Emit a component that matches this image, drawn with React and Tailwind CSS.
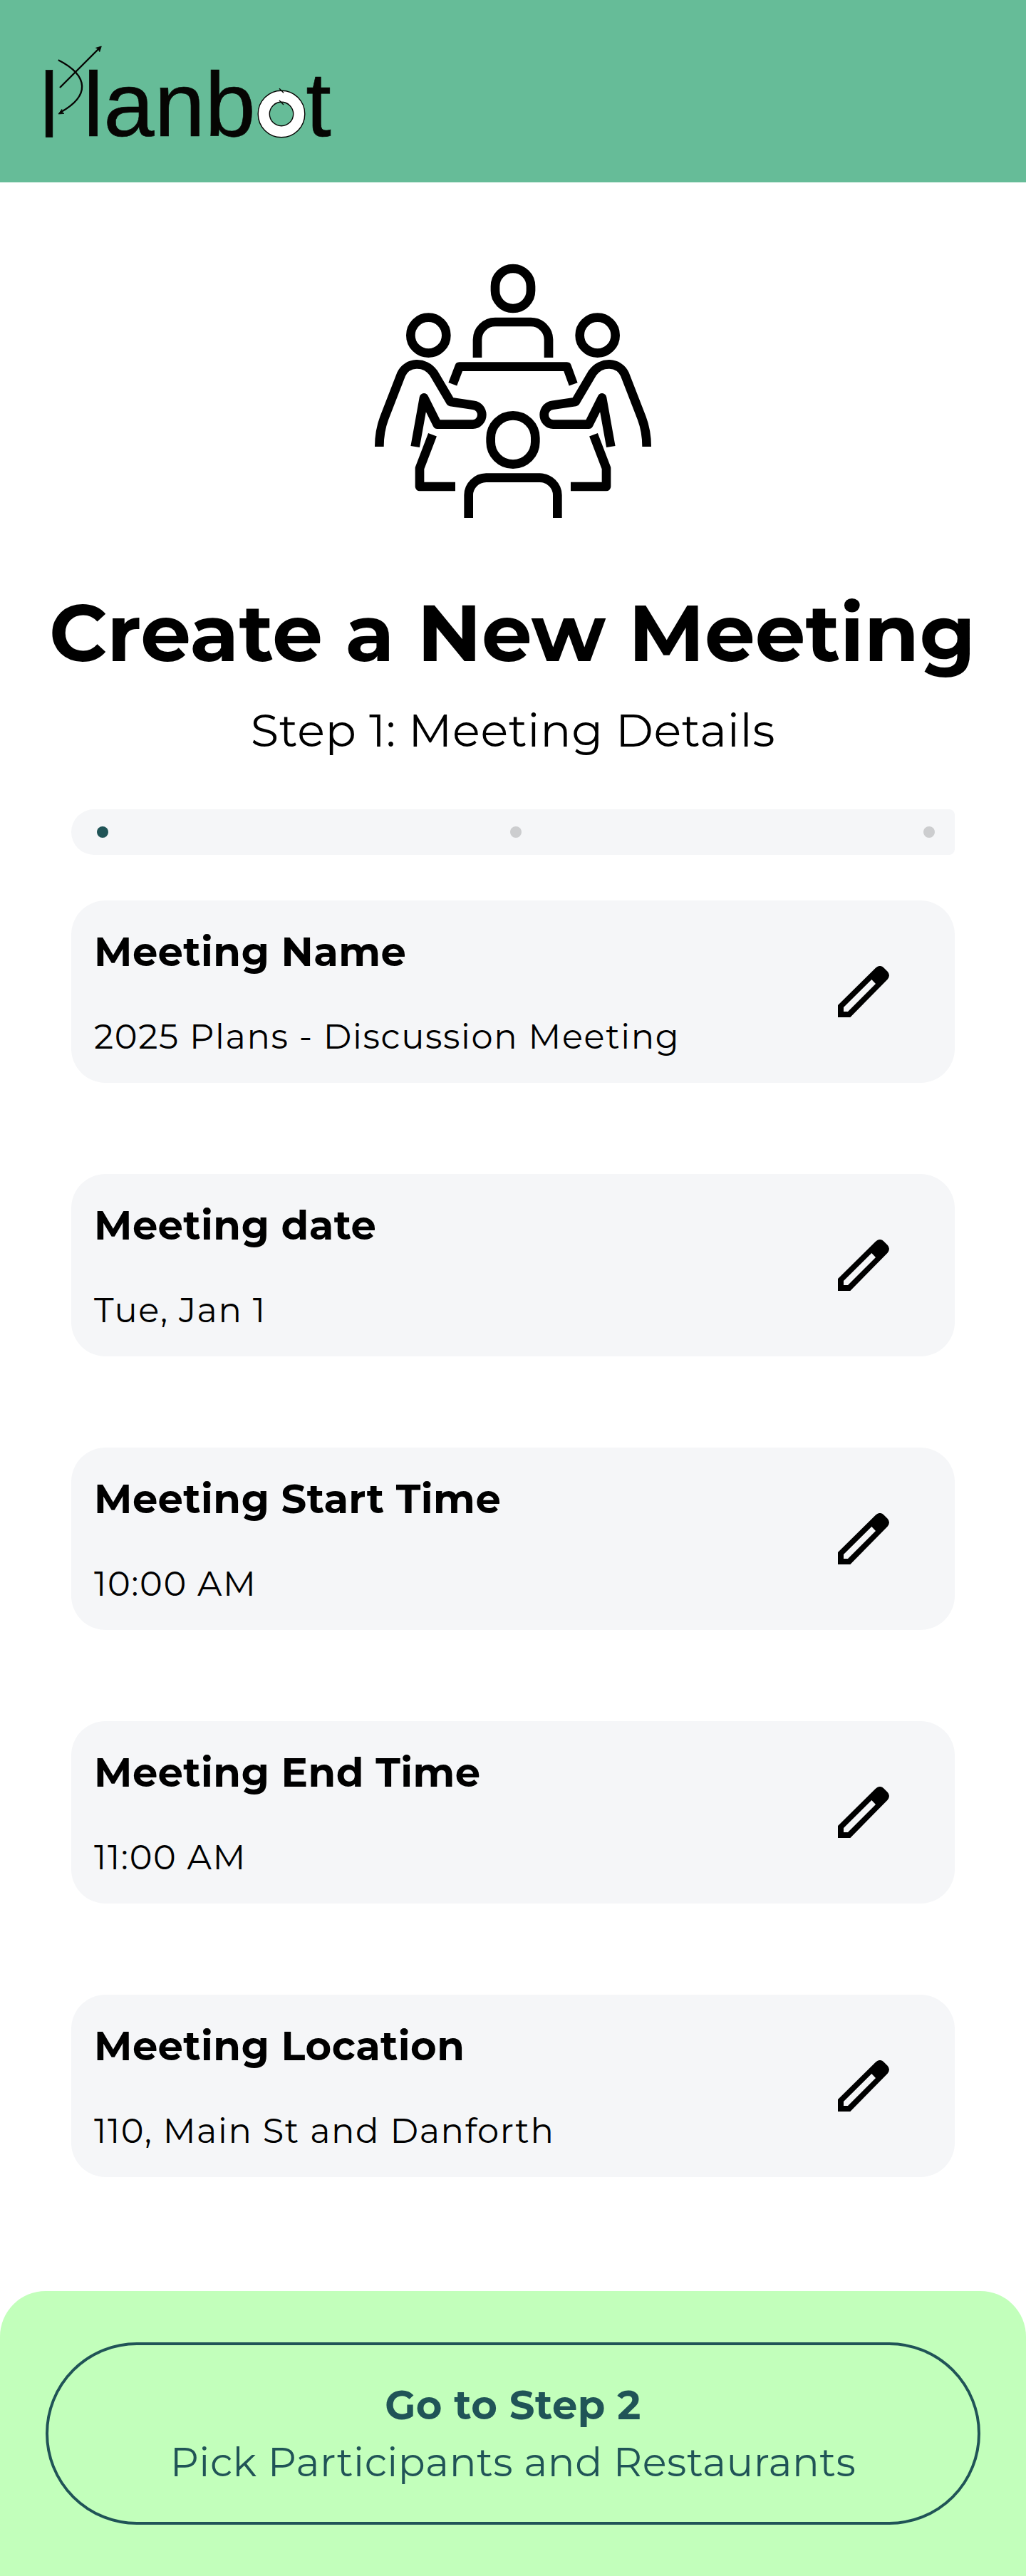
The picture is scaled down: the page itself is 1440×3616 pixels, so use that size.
const details = [
  { label: "Meeting Name", value: "2025 Plans - Discussion Meeting" },
  { label: "Meeting date", value: "Tue, Jan 1" },
  { label: "Meeting Start Time", value: "10:00 AM" },
  { label: "Meeting End Time", value: "11:00 AM" },
  { label: "Meeting Location", value: "110, Main St and Danforth" },
];

function Logo() {
  return (
    <svg
      viewBox="0 0 416 176"
      className="h-44 w-[416px] overflow-visible"
      role="img"
      aria-label="Planbot"
    >
      <g
        fill="#060503"
        stroke="#060503"
        strokeWidth="0.7"
        className="font-['Liberation_Sans',Arial,sans-serif] text-[128px]"
      >
        <rect x="8.2" y="42.5" width="9.6" height="94" />
        <text x="60.8" y="135">lanb</text>
        <text x="373.2" y="135">t</text>
      </g>
      {/* crossed arrows that form the bowl of the P */}
      <g fill="none" stroke="#060503" strokeWidth="2.4">
        <path d="M28 67 L82.5 12.5" />
        <path d="M25.8 28.3 C70 51 69 79 30 101" />
      </g>
      <path d="M86.3 9 L78.5 11.3 L82 12.8 L83.8 16.7Z" fill="#060503" stroke="#060503" strokeWidth="0.8" />
      <path d="M26 104 L30.8 97.4 L30.8 101.2 L34 103.4Z" fill="#060503" stroke="#060503" strokeWidth="0.8" />
      {/* ring that stands in for the o */}
      <circle cx="339" cy="104" r="24.8" fill="none" stroke="#fff" strokeWidth="16" />
      <g fill="none" stroke="#060503" strokeWidth="1.4">
        <circle cx="339" cy="104" r="32.8" />
        <circle cx="339" cy="104" r="16.7" />
        <path d="M336 68.3 L342 74.3 M336 85 L342 91" />
      </g>
    </svg>
  );
}

function SidePerson() {
  return (
    <>
      <circle cx="304" cy="392" r="75" />
      <path d="M97 861 C97 810 107 769 118 740 L189 557 C214 502 289 500 325 550 L397 672 L493 686 C516 689 529 708 529 727 A39 40 0 0 1 491 767 H341 L285 655 L248 861" />
      <path d="M321 811 L267 952 V1029 H417" />
    </>
  );
}

function MeetingIcon() {
  return (
    <svg
      viewBox="0 0 1320 1260"
      className="h-[420px] w-[440px]"
      fill="none"
      stroke="#000"
      strokeWidth="38"
      strokeLinejoin="round"
      aria-hidden="true"
    >
      <rect x="585" y="111" width="150" height="168" rx="75" />
      <path d="M510 486 V410 A75 75 0 0 1 585 336 H735 A75 75 0 0 1 810 410 V486" />
      <path d="M406 598 L434 524 H887 L914 598" />
      <SidePerson />
      <g transform="translate(1320 0) scale(-1 1)">
        <SidePerson />
      </g>
      <rect x="566" y="730" width="188" height="205" rx="94" />
      <path d="M473 1161 V1065 A75 73 0 0 1 547 992 H773 A75 73 0 0 1 847 1065 V1161" />
    </svg>
  );
}

function PencilIcon() {
  return (
    <svg viewBox="0 0 216 216" className="size-[72px]" aria-hidden="true">
      <path
        fillRule="evenodd"
        d="M0 165 L158 9 Q176 -9 194 8 L209 23 Q223 39 209 56 L52 216 H0Z M24 174 V192 H42 L159 75 L142 57Z"
      />
    </svg>
  );
}

function DetailCard({ label, value }) {
  return (
    <div className="flex h-64 items-center justify-between rounded-[48px] bg-[#f5f6f8] pr-[92px] pl-8">
      <div className="flex flex-col gap-[67px] self-start pt-11">
        <h2 className="text-[56px] leading-[56px] font-bold tracking-[0.4px]">{label}</h2>
        <p className="text-[48px] leading-[48px] tracking-[1.6px]">{value}</p>
      </div>
      <button type="button" aria-label={`Edit ${label}`}>
        <PencilIcon />
      </button>
    </div>
  );
}

export default function App() {
  return (
    <div className="flex h-[3616px] w-[1440px] flex-col overflow-hidden bg-white font-[Montserrat,Inter,sans-serif] text-black">
      <header className="flex h-64 shrink-0 items-start bg-[#66bc98] pt-14 pl-14">
        <Logo />
      </header>

      <main className="flex flex-col px-[100px]">
        <div className="mt-[84px] flex justify-center">
          <MeetingIcon />
        </div>
        <h1 className="mt-[72px] -mx-20 pr-0.5 text-center text-[112px] leading-[112px] font-bold whitespace-nowrap">
          Create a New Meeting
        </h1>
        <p className="mt-[49px] text-center text-[64px] leading-[64px] tracking-[0.65px]">
          Step 1: Meeting Details
        </p>

        <div className="mt-[79px] flex h-16 items-center justify-between rounded-l-[32px] rounded-r-lg bg-[#f5f6f8] pr-7 pl-9">
          <span className="size-4 rounded-full bg-[#205457]" />
          <span className="size-4 rounded-full bg-[#cccdcf]" />
          <span className="size-4 rounded-full bg-[#cccdcf]" />
        </div>

        <div className="mt-16 flex flex-col gap-32">
          {details.map((item) => (
            <DetailCard key={item.label} label={item.label} value={item.value} />
          ))}
        </div>
      </main>

      <footer className="mt-40 h-[400px] shrink-0 rounded-t-[64px] bg-[#c2ffbb] px-16 pt-[72px]">
        <button
          type="button"
          className="flex h-64 w-full flex-col items-center justify-center rounded-full border-4 border-[#205457] text-[56px] leading-[80px] text-[#205457]"
        >
          <span className="font-bold tracking-[0.5px]">Go to Step 2</span>
          <span className="tracking-[0.5px]">Pick Participants and Restaurants</span>
        </button>
      </footer>
    </div>
  );
}
